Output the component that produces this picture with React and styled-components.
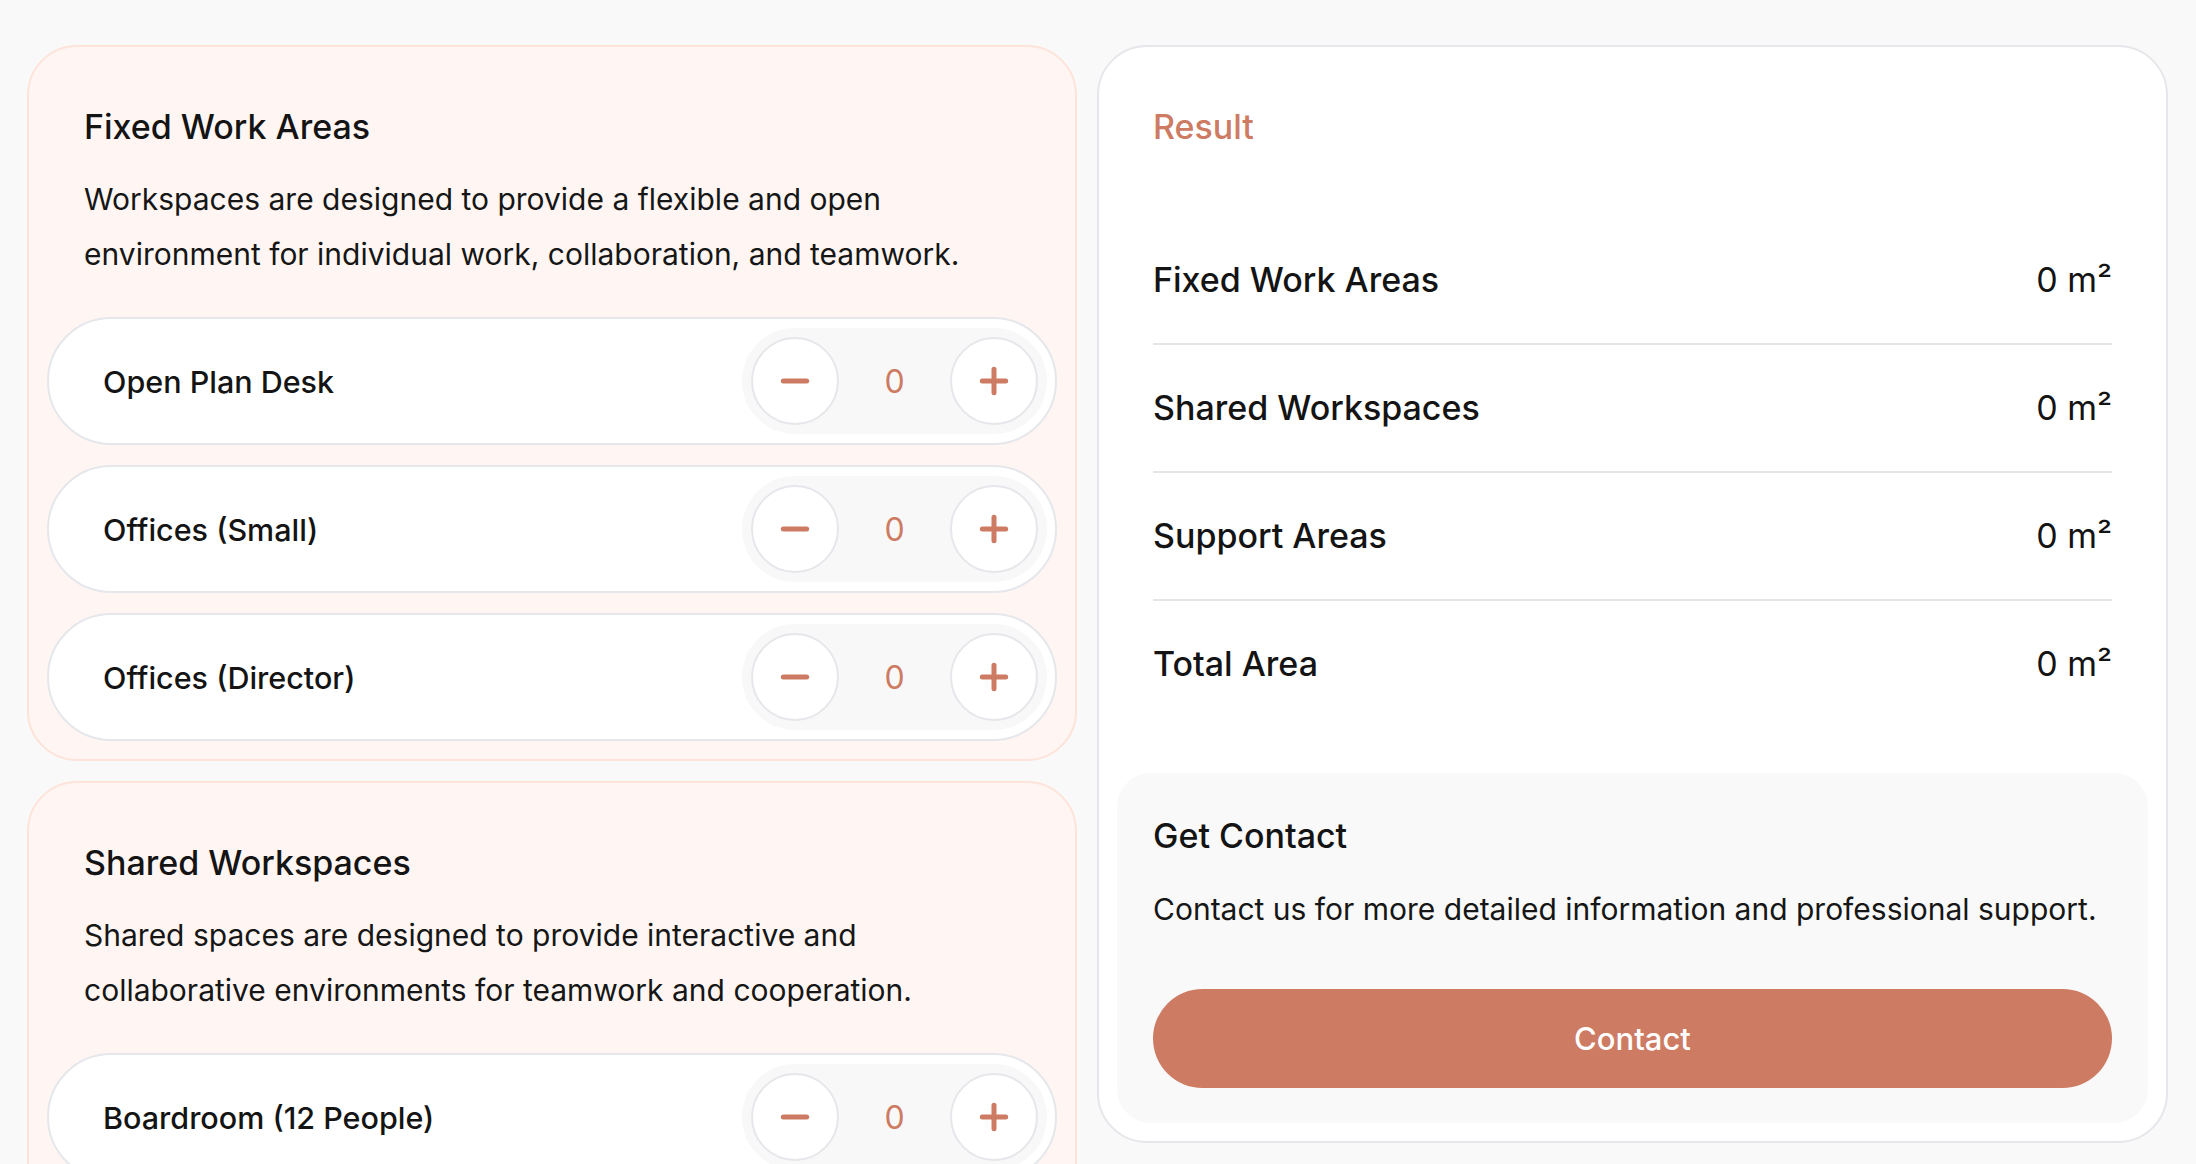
import React from 'react';
import styled, { createGlobalStyle } from 'styled-components';
import { Minus, Plus } from 'lucide-react';

const ACCENT = '#cd7b63';

const GlobalStyle = createGlobalStyle`
  *, *::before, *::after { box-sizing: border-box; }
  html, body { margin: 0; padding: 0; background: #f9f9f9; }
  body {
    font-family: Inter, "Noto Sans", "Liberation Sans", sans-serif;
    color: #141414;
    -webkit-font-smoothing: antialiased;
  }
`;

const Page = styled.main`
  display: grid;
  grid-template-columns: 1050px 1071px;
  column-gap: 20px;
  align-items: start;
  padding: 45px 28px 45px 27px;
`;

const Column = styled.div`
  display: flex;
  flex-direction: column;
  gap: 20px;
`;

const Card = styled.section`
  display: flex;
  flex-direction: column;
  gap: 20px;
  padding: 18px;
  border-radius: 50px;
  background: ${(p) => (p.$tone === 'warm' ? '#fff6f4' : '#ffffff')};
  border: 2px solid ${(p) => (p.$tone === 'warm' ? '#fde3d9' : '#e5e7eb')};
`;

const CardHeader = styled.header`
  padding: 36px 37px 15px;
`;

const Heading = styled.h2`
  margin: 0;
  font-size: 34px;
  line-height: 51px;
  font-weight: 500;
  color: ${(p) => (p.$accent ? ACCENT : '#141414')};
`;

const Text = styled.p`
  margin: ${(p) => p.$top || 20}px 0 0;
  font-size: 30px;
  line-height: 55px;
  font-weight: 400;
  color: #161616;
`;

const ItemRow = styled.div`
  display: flex;
  align-items: center;
  justify-content: space-between;
  background: #ffffff;
  border: 2px solid #e5e7eb;
  border-radius: 999px;
  padding: 9px 8px 9px 54px;
`;

const ItemLabel = styled.span`
  font-size: 30.5px;
  font-weight: 500;
  color: #141414;
`;

const Stepper = styled.div`
  display: flex;
  align-items: center;
  padding: 9px;
  border-radius: 999px;
  background: #f8f8f8;
`;

const RoundButton = styled.button`
  width: 88px;
  height: 88px;
  border-radius: 50%;
  border: 2px solid #e5e7eb;
  background: #ffffff;
  color: ${ACCENT};
  display: grid;
  place-items: center;
  padding: 0;
  cursor: pointer;
`;

const Count = styled.span`
  width: 111px;
  text-align: center;
  font-size: 32px;
  font-weight: 400;
  color: ${ACCENT};
`;

const ResultSection = styled.div`
  padding: 36px 36px 26px;
`;

const ResultList = styled.ul`
  list-style: none;
  margin: 65px 0 0;
  padding: 0;
`;

const ResultRow = styled.li`
  display: flex;
  align-items: center;
  justify-content: space-between;
  padding: 35px 0;
  font-size: 34px;
  line-height: 56px;
  border-bottom: 2px solid #e5e5e5;
  &:last-child { border-bottom: none; }
`;

const ResultLabel = styled.span`
  font-weight: 500;
`;

const ResultValue = styled.span`
  font-weight: 400;
`;

const ContactBox = styled.div`
  background: #f9f9f9;
  border-radius: 34px;
  padding: 37px 36px 35px;
`;

const ContactButton = styled.button`
  display: block;
  width: 100%;
  height: 99px;
  margin-top: 52px;
  border: none;
  border-radius: 999px;
  background: ${ACCENT};
  color: #ffffff;
  font-family: inherit;
  font-size: 31px;
  font-weight: 500;
  cursor: pointer;
`;

function Counter({ label }) {
  return (
    <ItemRow>
      <ItemLabel>{label}</ItemLabel>
      <Stepper>
        <RoundButton aria-label="decrease">
          <Minus size={40} strokeWidth={3} />
        </RoundButton>
        <Count>0</Count>
        <RoundButton aria-label="increase">
          <Plus size={40} strokeWidth={3} />
        </RoundButton>
      </Stepper>
    </ItemRow>
  );
}

const groups = [
  {
    title: 'Fixed Work Areas',
    text: 'Workspaces are designed to provide a flexible and open environment for individual work, collaboration, and teamwork.',
    items: ['Open Plan Desk', 'Offices (Small)', 'Offices (Director)'],
  },
  {
    title: 'Shared Workspaces',
    text: 'Shared spaces are designed to provide interactive and collaborative environments for teamwork and cooperation.',
    items: ['Boardroom (12 People)', 'Meeting Room (8 People)', 'Meeting Room (4 People)'],
  },
  {
    title: 'Support Areas',
    text: 'Support areas are designed to provide the services that keep the office running smoothly every day.',
    items: ['Reception', 'Kitchen', 'Storage'],
  },
];

const results = [
  ['Fixed Work Areas', '0 m²'],
  ['Shared Workspaces', '0 m²'],
  ['Support Areas', '0 m²'],
  ['Total Area', '0 m²'],
];

export default function App() {
  return (
    <>
      <GlobalStyle />
      <Page>
        <Column>
          {groups.map((g) => (
            <Card key={g.title} $tone="warm">
              <CardHeader>
                <Heading>{g.title}</Heading>
                <Text>{g.text}</Text>
              </CardHeader>
              {g.items.map((it) => (
                <Counter key={it} label={it} />
              ))}
            </Card>
          ))}
        </Column>
        <Card>
          <ResultSection>
            <Heading $accent>Result</Heading>
            <ResultList>
              {results.map(([l, v]) => (
                <ResultRow key={l}>
                  <ResultLabel>{l}</ResultLabel>
                  <ResultValue>{v}</ResultValue>
                </ResultRow>
              ))}
            </ResultList>
          </ResultSection>
          <ContactBox>
            <Heading>Get Contact</Heading>
            <Text $top={21}>Contact us for more detailed information and professional support.</Text>
            <ContactButton>Contact</ContactButton>
          </ContactBox>
        </Card>
      </Page>
    </>
  );
}
